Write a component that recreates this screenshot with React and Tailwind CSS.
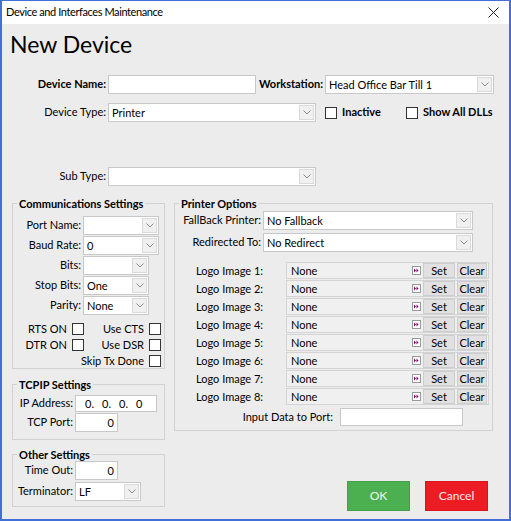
import React from 'react';

const font = { fontFamily: 'Lato, "Noto Sans", sans-serif' };

function Chevron() {
  return (
    <svg width="8" height="5" viewBox="0 0 8 5" className="block">
      <path d="M0.5 0.5 L4 4 L7.5 0.5" fill="none" stroke="#8a8a8a" strokeWidth="1" />
    </svg>
  );
}

function Select({ value = '', w }) {
  return (
    <div className={`${w} h-[19px] bg-white border border-[#c8c8c8] flex items-center`}>
      <span className="flex-1 pl-[3px] truncate leading-none">{value}</span>
      <div className="w-[15px] h-[15px] mr-[1px] bg-[#f0f0f0] border border-[#dadada] flex items-center justify-center">
        <Chevron />
      </div>
    </div>
  );
}

function TextBox({ value = '', w, right, h = 'h-[19px]' }) {
  return (
    <div className={`${w} ${h} bg-white border border-[#c8c8c8] flex items-center px-[3px] ${right ? 'justify-end' : ''}`}>
      <span className="leading-none whitespace-pre">{value}</span>
    </div>
  );
}

function Box() {
  return <div className="w-[12px] h-[12px] shrink-0 bg-white border border-[#333]" />;
}

function FastIcon() {
  return (
    <svg width="9" height="9" viewBox="0 0 9 9" className="block">
      <rect x="0.5" y="0.5" width="8" height="8" fill="#fff" stroke="#9a9a9a" />
      <path d="M2 2.5 L4 4.5 L2 6.5 Z M4.5 2.5 L6.5 4.5 L4.5 6.5 Z" fill="#800070" />
    </svg>
  );
}

function Field({ label, children, labelW }) {
  return (
    <div className="flex items-center h-[19px]">
      <div className={`${labelW} text-right shrink-0 whitespace-nowrap`}>{label}</div>
      <div className="ml-[2px]">{children}</div>
    </div>
  );
}

function LogoRow({ n }) {
  return (
    <div className="flex items-center h-[17px] mt-[1px]">
      <div className="w-[90px] pl-[21px] shrink-0 box-content leading-[17px]">Logo Image {n}:</div>
      <div className="w-[203px] h-[17px] bg-[#f0f0f0] border border-[#d4d4d4] flex items-center">
        <span className="flex-1 pl-[4px] leading-none">None</span>
        <FastIcon />
        <div className="ml-[2px] w-[32px] h-[15px] bg-[#e1e1e1] border border-[#cdcdcd] flex items-center justify-center leading-none">Set</div>
        <div className="ml-[2px] mr-[1px] w-[30px] h-[15px] bg-[#e1e1e1] border border-[#cdcdcd] flex items-center justify-center leading-none">Clear</div>
      </div>
    </div>
  );
}

function Check({ label }) {
  return (
    <div className="flex items-center justify-end gap-[5px] whitespace-nowrap">
      <span>{label}</span>
      <Box />
    </div>
  );
}

export default function App() {
  return (
    <div style={font} className="w-[511px] h-[521px] bg-[#ececec] border-x-2 border-b-2 border-t border-[#4170d8] flex flex-col text-[11px] text-black overflow-hidden">
      {/* Title bar */}
      <div className="h-[23px] bg-white flex items-center justify-between shrink-0">
        <span className="pl-[4px] text-[11px] tracking-[-0.4px]">Device and Interfaces Maintenance</span>
        <svg width="11" height="11" viewBox="0 0 11 11" className="mr-[10px]">
          <path d="M0.5 0.5 L10.5 10.5 M10.5 0.5 L0.5 10.5" stroke="#222" strokeWidth="1" />
        </svg>
      </div>

      <div className="pl-[8px] mt-[6px] h-[28px] text-[23px] leading-[28px]">New Device</div>

      {/* Device name row */}
      <div className="flex items-center h-[19px] mt-[17px]">
        <div className="w-[104px] text-right font-bold">Device Name:</div>
        <div className="ml-[2px]"><TextBox w="w-[148px]" /></div>
        <div className="w-[67px] text-right font-bold">Workstation:</div>
        <div className="ml-[2px]"><Select w="w-[169px]" value="Head Office Bar Till 1" /></div>
      </div>

      {/* Device type row */}
      <div className="flex items-center h-[19px] mt-[9px]">
        <div className="w-[104px] text-right">Device Type:</div>
        <div className="ml-[2px]"><Select w="w-[208px]" value="Printer" /></div>
        <div className="ml-[9px] w-[81px] flex items-center gap-[5px]">
          <Box />
          <span className="font-bold">Inactive</span>
        </div>
        <div className="flex items-center gap-[5px]">
          <Box />
          <span className="font-bold">Show All DLLs</span>
        </div>
      </div>

      {/* Sub type row */}
      <div className="flex items-center h-[19px] mt-[45px]">
        <div className="w-[104px] text-right">Sub Type:</div>
        <div className="ml-[2px]"><Select w="w-[208px]" /></div>
      </div>

      <div className="flex mt-[11px]">
        {/* Left column */}
        <div className="ml-[10px] w-[153px] flex flex-col">
          <fieldset className="h-[172px] border border-[#d2d2d2]">
            <legend className="ml-[4px] px-[2px] font-bold leading-[13px]">Communications Settings</legend>
            <div className="pt-[6px] flex flex-col gap-[1px]">
              <Field label="Port Name:" labelW="w-[68px]"><Select w="w-[76px]" /></Field>
              <Field label="Baud Rate:" labelW="w-[68px]"><Select w="w-[76px]" value="0" /></Field>
              <Field label="Bits:" labelW="w-[68px]"><Select w="w-[66px]" /></Field>
              <Field label="Stop Bits:" labelW="w-[68px]"><Select w="w-[66px]" value="One" /></Field>
              <Field label="Parity:" labelW="w-[68px]"><Select w="w-[66px]" value="None" /></Field>
            </div>
            <div className="grid grid-cols-[71px_77px] mt-[6px] leading-[15px] gap-y-[1px]">
              <Check label="RTS ON" />
              <Check label="Use CTS" />
              <Check label="DTR ON" />
              <Check label="Use DSR" />
              <div />
              <Check label="Skip Tx Done" />
            </div>
          </fieldset>

          <fieldset className="h-[62px] mt-[9px] border border-[#d2d2d2]">
            <legend className="ml-[4px] px-[2px] font-bold leading-[13px]">TCPIP Settings</legend>
            <div className="pt-[4px] flex flex-col gap-[1px]">
              <div className="flex items-center">
                <div className="w-[60px] text-right">IP Address:</div>
                <div className="ml-[2px] w-[82px] h-[17px] bg-white border border-[#c8c8c8] flex items-center pl-[9px] leading-none">
                  <span className="w-[17px]">0.</span>
                  <span className="w-[17px]">0.</span>
                  <span className="w-[17px]">0.</span>
                  <span>0</span>
                </div>
              </div>
              <div className="flex items-center">
                <div className="w-[60px] text-right">TCP Port:</div>
                <div className="ml-[2px]"><TextBox w="w-[43px]" value="0" right /></div>
              </div>
            </div>
          </fieldset>

          <fieldset className="h-[59px] mt-[8px] border border-[#d2d2d2]">
            <legend className="ml-[4px] px-[2px] font-bold leading-[13px]">Other Settings</legend>
            <div className="flex flex-col gap-[2px]">
              <div className="flex items-center">
                <div className="w-[60px] text-right">Time Out:</div>
                <div className="ml-[2px]"><TextBox w="w-[43px]" value="0" right /></div>
              </div>
              <div className="flex items-center">
                <div className="w-[60px] text-right">Terminator:</div>
                <div className="ml-[2px]"><Select w="w-[66px]" value="LF" /></div>
              </div>
            </div>
          </fieldset>
        </div>

        {/* Right column */}
        <div className="ml-[9px] w-[319px] flex flex-col">
          <fieldset className="h-[234px] border border-[#d2d2d2]">
            <legend className="ml-[4px] px-[2px] font-bold leading-[13px]">Printer Options</legend>
            <div className="pt-[1px]">
              <Field label="FallBack Printer:" labelW="w-[86px]"><Select w="w-[210px]" value="No Fallback" /></Field>
              <div className="mt-[3px]">
                <Field label="Redirected To:" labelW="w-[86px]"><Select w="w-[210px]" value="No Redirect" /></Field>
              </div>
            </div>
            <div className="mt-[10px]">
              {[1, 2, 3, 4, 5, 6, 7, 8].map((n) => (
                <LogoRow key={n} n={n} />
              ))}
            </div>
            <div className="flex items-center mt-[3px]">
              <div className="w-[158px] text-right">Input Data to Port:</div>
              <div className="ml-[7px]"><TextBox w="w-[123px]" h="h-[18px]" /></div>
            </div>
          </fieldset>

          <div className="flex mt-[50px]">
            <button className="ml-[173px] w-[63px] h-[30px] bg-[#4caf50] border border-[#43a047] text-[#eef8ee] text-[12px]">OK</button>
            <button className="ml-[15px] w-[63px] h-[30px] bg-[#ed1c24] border border-[#d9141c] text-[#fde8e8] text-[12px]">Cancel</button>
          </div>
        </div>
      </div>
    </div>
  );
}
